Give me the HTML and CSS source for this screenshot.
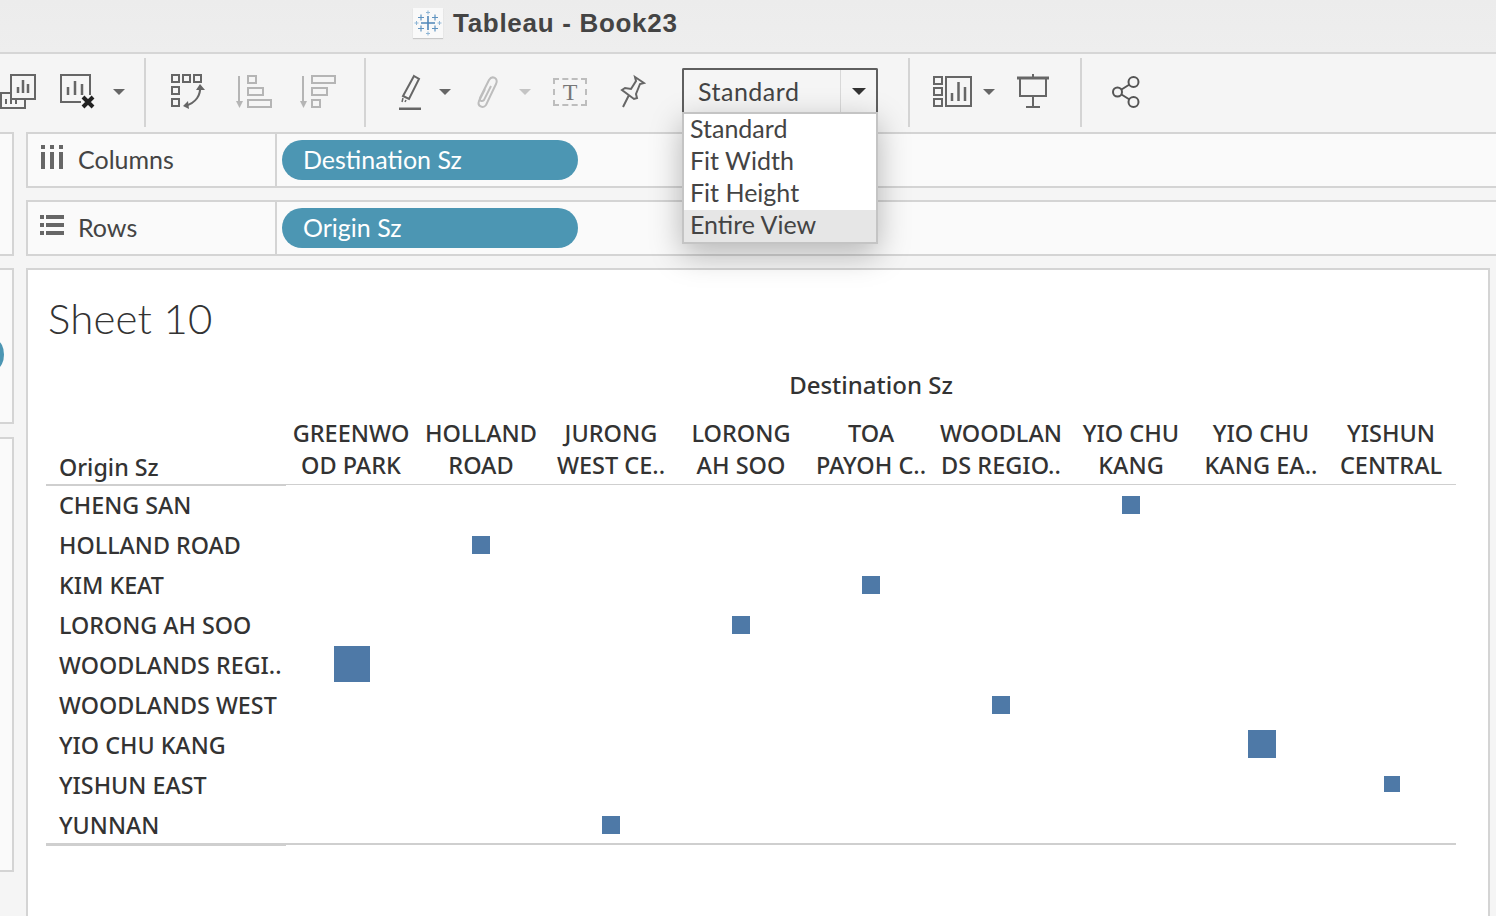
FILE: index.html
```html
<!DOCTYPE html>
<html lang="en">
<head>
<meta charset="utf-8">
<title>Tableau - Book23</title>
<link rel="stylesheet" href="styles.css">
</head>
<body>
<header class="titlebar">
  <span class="app-logo">
    <svg width="30" height="30" viewBox="0 0 30 30" fill="none" stroke-linecap="butt">
      <g stroke="#4f86b8" stroke-width="1.6"><path d="M15 8v14M8 15h14"/></g>
      <g stroke="#5f93c0" stroke-width="1.2"><path d="M8 6.500v6M5 9.500h6M22 6.500v6M19 9.500h6M8 17.500v6M5 20.500h6M22 17.500v6M19 20.500h6"/></g>
      <g stroke="#8fb6d6" stroke-width="1"><path d="M15 2.500v4M13 4.500h4M15 23.500v4M13 25.500h4M3.500 13v4M1.500 15h4M26.500 13v4M24.500 15h4"/></g>
    </svg>
  </span>
  <span class="app-title">Tableau - Book23</span>
</header>

<nav class="toolbar">
  <svg class="ico w36" viewBox="0 0 36 36" fill="none" stroke="#666" stroke-width="2"><path d="M11 1h24v24H11z"/><path d="M18 19v-6M23 19V6M28 19v-9" stroke-width="2.500"/><path d="M10 19H1v15h24v-9M6 25v5M11 25v5M16 25v5"/></svg>
  <svg class="ico w36 gap-24" viewBox="0 0 36 36" fill="none" stroke="#666" stroke-width="2"><path d="M21 28H1V1h29v20"/><path d="M8 21v-8M15 21V7M22 21v-11" stroke-width="2.500"/><path d="M23 23l10 10M33 23L23 33" stroke="#222" stroke-width="4"/></svg>
  <span class="caret gap-17"></span>
  <span class="sep gap-19"></span>

  <svg class="ico w36 gap-25" viewBox="0 0 36 36" fill="none" stroke="#666" stroke-width="2"><path d="M1 1h7v7H1zM12 1h7v7h-7zM23 1h7v7h-7zM1 13h7v7H1zM1 25h7v7H1z"/><path d="M29 12c1 9-4 17-15 20" /><path d="M25 16l4-6 5 6zM17 27l-5 5 6 3z" fill="#666" stroke="none"/></svg>
  <svg class="ico w36 gap-29" viewBox="0 0 36 36" fill="none" stroke="#b5b5b5" stroke-width="2"><path d="M3 2v28"/><path d="M0 27h7l-3.500 7z" fill="#b5b5b5" stroke="none"/><path d="M12 2h8v7h-8zM12 14h15v7H12zM12 26h23v7H12z"/></svg>
  <svg class="ico w36 gap-28" viewBox="0 0 36 36" fill="none" stroke="#b5b5b5" stroke-width="2"><path d="M3 2v28"/><path d="M0 27h7l-3.500 7z" fill="#b5b5b5" stroke="none"/><path d="M12 2h23v7H12zM12 14h15v7H12zM12 26h8v7h-8z"/></svg>
  <span class="sep gap-28"></span>

  <svg class="ico w24 gap-32" viewBox="0 0 24 36" fill="none" stroke="#666" stroke-width="2"><path d="M16 2l5 3-10 20-6-3z"/><path d="M5 24l-1 4M8 26l-1 2" stroke-width="1.500"/><path d="M1 35h22" stroke-width="3"/></svg>
  <span class="caret gap-17"></span>
  <svg class="ico w26 gap-23" viewBox="0 0 26 36" fill="none" stroke="#bdbdbd" stroke-width="2"><path d="M11 15L5 27c-2 5 4 8 7 4L22 10c3-6-4-9-7-4L6 24c-1 3 2 4 4 2l7-14"/></svg>
  <span class="caret light gap-19"></span>
  <span class="text-box gap-22">T</span>
  <svg class="ico w26 gap-33" viewBox="0 0 26 36" fill="none" stroke="#666" stroke-width="2"><path d="M15 3l9 6-4 1-4 10 1 4-3 1-12-9 3-2 6 1 5-8zM9 21L3 33"/></svg>

  <div class="combo gap-36">
    <span class="combo-value">Standard</span>
    <span class="combo-arrow"><span class="caret dark"></span></span>
  </div>
  <span class="sep gap-30"></span>

  <svg class="ico w40 gap-22" viewBox="0 0 40 36" fill="none" stroke="#666" stroke-width="2"><path d="M2 3h8v7H2zM2 14h8v7H2zM2 25h8v7H2zM14 3h25v29H14z"/><path d="M20 27v-8M26.500 27V8M33 27V13" stroke-width="2.500"/></svg>
  <span class="caret gap-11"></span>
  <svg class="ico w32 gap-22" viewBox="0 0 32 36" fill="none" stroke="#666" stroke-width="2"><path d="M0 4h32" stroke-width="3"/><path d="M3 4v18h26V4M16 22v11M9 33h14M16 0v4"/></svg>
  <span class="sep gap-31"></span>

  <svg class="ico w28 gap-30" viewBox="0 0 28 36" fill="none" stroke="#555" stroke-width="2"><circle cx="5.500" cy="18" r="4.500"/><circle cx="21.500" cy="8" r="5"/><circle cx="21.500" cy="28" r="5"/><path d="M9.500 15.500l8-5M9.500 20.500l8 5"/></svg>
</nav>

<div class="workspace">
  <aside class="side">
    <div class="side-box side-top"></div>
    <div class="side-box side-mid"><span class="side-dot"></span></div>
    <div class="side-box side-bottom"></div>
  </aside>

  <main class="content">
    <section class="shelf">
      <div class="shelf-label">
        <svg class="shelf-ico" width="22" height="24" viewBox="0 0 22 24" fill="#666"><path d="M0 0h4v4H0zM9 0h4v4H9zM18 0h4v4h-4zM0 7h4v17H0zM9 7h4v17H9zM18 7h4v17h-4z"/></svg>
        <span>Columns</span>
      </div>
      <div class="shelf-body"><span class="pill">Destination Sz</span></div>
    </section>
    <section class="shelf">
      <div class="shelf-label">
        <svg class="shelf-ico rows-ico" width="24" height="20" viewBox="0 0 24 20" fill="#666"><path d="M0 0h4v4H0zM0 8h4v4H0zM0 16h4v4H0zM6 0h18v4H6zM6 8h18v4H6zM6 16h18v4H6z"/></svg>
        <span>Rows</span>
      </div>
      <div class="shelf-body"><span class="pill">Origin Sz</span></div>
    </section>

    <section class="view">
      <h1 class="sheet-title">Sheet 10</h1>
      <div class="chart">
        <div class="axis-title">Destination Sz</div>
        <div class="chart-head">
          <div class="row-title">Origin Sz</div>
          <div class="col-head">GREENWO<br>OD PARK</div>
          <div class="col-head">HOLLAND<br>ROAD</div>
          <div class="col-head">JURONG<br>WEST CE..</div>
          <div class="col-head">LORONG<br>AH SOO</div>
          <div class="col-head">TOA<br>PAYOH C..</div>
          <div class="col-head">WOODLAN<br>DS REGIO..</div>
          <div class="col-head">YIO CHU<br>KANG</div>
          <div class="col-head">YIO CHU<br>KANG EA..</div>
          <div class="col-head">YISHUN<br>CENTRAL</div>
        </div>
        <div class="chart-body">
          <div class="row"><div class="row-name">CHENG SAN</div><div class="cell c7"><span class="mark s18"></span></div></div>
          <div class="row"><div class="row-name">HOLLAND ROAD</div><div class="cell c2"><span class="mark s18"></span></div></div>
          <div class="row"><div class="row-name">KIM KEAT</div><div class="cell c5"><span class="mark s18"></span></div></div>
          <div class="row"><div class="row-name">LORONG AH SOO</div><div class="cell c4"><span class="mark s18"></span></div></div>
          <div class="row"><div class="row-name">WOODLANDS REGI..</div><div class="cell c1"><span class="mark s36"></span></div></div>
          <div class="row"><div class="row-name">WOODLANDS WEST</div><div class="cell c6"><span class="mark s18"></span></div></div>
          <div class="row"><div class="row-name">YIO CHU KANG</div><div class="cell c8"><span class="mark s28"></span></div></div>
          <div class="row"><div class="row-name">YISHUN EAST</div><div class="cell c9"><span class="mark s16"></span></div></div>
          <div class="row"><div class="row-name">YUNNAN</div><div class="cell c3"><span class="mark s18"></span></div></div>
        </div>
      </div>
    </section>
  </main>
</div>

<ul class="fit-menu">
  <li>Standard</li>
  <li>Fit Width</li>
  <li>Fit Height</li>
  <li class="active">Entire View</li>
</ul>
</body>
</html>
```

FILE: styles.css
```css
* { box-sizing: border-box; }
html, body { margin: 0; padding: 0; height: 100%; }
body {
  position: relative;
  height: 916px;
  overflow: hidden;
  background: #f5f5f5;
  color: #333;
  font-family: "Lato", "Liberation Sans", sans-serif;
}

.titlebar {
  height: 54px;
  display: flex;
  align-items: center;
  padding: 0 0 7px 413px;
  background: linear-gradient(#ececec, #eeeeee);
  border-bottom: 2px solid #d6d6d6;
}
.app-logo {
  width: 30px;
  height: 30px;
  display: flex;
  background: #f9f9f9;
  box-shadow: 0 1px 1px #c8c8c8;
}
.app-title {
  margin: 2px 0 0 10px;
  font-family: "Liberation Sans", sans-serif;
  font-weight: 700;
  font-size: 26px;
  letter-spacing: 0.7px;
  color: #444;
}

.toolbar {
  height: 78px;
  display: flex;
  align-items: center;
  background: #f5f5f5;
  padding-bottom: 2px;
}
.ico { display: block; height: 36px; flex: none; }
.w24 { width: 24px; }
.w26 { width: 26px; }
.w28 { width: 28px; }
.w32 { width: 32px; }
.w36 { width: 36px; }
.w40 { width: 40px; }

.gap-11 { margin-left: 11px; }
.gap-17 { margin-left: 17px; }
.gap-19 { margin-left: 19px; }
.gap-22 { margin-left: 22px; }
.gap-23 { margin-left: 23px; }
.gap-24 { margin-left: 24px; }
.gap-25 { margin-left: 25px; }
.gap-28 { margin-left: 28px; }
.gap-29 { margin-left: 29px; }
.gap-30 { margin-left: 30px; }
.gap-31 { margin-left: 31px; }
.gap-32 { margin-left: 32px; }
.gap-33 { margin-left: 33px; }
.gap-36 { margin-left: 36px; }

.caret {
  flex: none;
  width: 0;
  height: 0;
  border-left: 6px solid transparent;
  border-right: 6px solid transparent;
  border-top: 6px solid #666;
}
.caret.light { border-top-color: #c4c4c4; }
.caret.dark { border-top-color: #333; border-left-width: 7px; border-right-width: 7px; border-top-width: 7px; }

.sep {
  flex: none;
  width: 2px;
  height: 69px;
  background: #d4d4d4;
}

.text-box {
  flex: none;
  width: 34px;
  height: 28px;
  display: flex;
  align-items: center;
  justify-content: center;
  border: 2px dashed #bdbdbd;
  font-family: "Liberation Serif", serif;
  font-size: 24px;
  color: #777;
}

.combo {
  flex: none;
  width: 196px;
  height: 44px;
  display: flex;
  margin-bottom: 4px;
  border: 2px solid #5f5f5f;
  border-bottom: 0;
  border-radius: 2px 2px 0 0;
  background: #f5f5f5;
}
.combo-value {
  flex: 1;
  padding-left: 14px;
  font-size: 25px;
  letter-spacing: 0.5px;
  line-height: 42px;
  color: #444;
}
.combo-arrow {
  width: 36px;
  display: flex;
  align-items: center;
  justify-content: center;
  border-left: 1px solid #d8d8d8;
}

.workspace { display: flex; align-items: stretch; }
.side { width: 14px; flex: none; display: flex; flex-direction: column; }
.side-box {
  background: #fafafa;
  border: 2px solid #d4d4d4;
  border-left: 0;
}
.side-top { height: 124px; }
.side-mid { height: 156px; margin-top: 12px; position: relative; }
.side-bottom { height: 435px; margin-top: 13px; }
.side-dot {
  position: absolute;
  left: -10px;
  top: 71px;
  width: 14px;
  height: 27px;
  border-radius: 50%;
  background: #4c96b3;
}

.content { flex: 1; margin-left: 12px; min-width: 0; }
.shelf {
  height: 56px;
  display: flex;
  margin-bottom: 12px;
  background: #fafafa;
  border: 2px solid #d4d4d4;
  border-right: 0;
}
.shelf-label {
  width: 249px;
  display: flex;
  align-items: center;
  padding: 0 0 3px 13px;
  border-right: 2px solid #d4d4d4;
  font-size: 25px;
  color: #444;
}
.shelf-label span { margin-left: 15px; }
.shelf-ico { flex: none; margin-bottom: 4px; }
.rows-ico { margin-left: -1px; margin-right: -1px; }
.shelf-body { flex: 1; display: flex; align-items: flex-start; padding: 6px 0 0 5px; }
.pill {
  width: 296px;
  height: 40px;
  padding-left: 21px;
  border-radius: 20px;
  background: #4c96b3;
  color: #fff;
  font-size: 25px;
  line-height: 38px;
}

.view {
  width: 1464px;
  height: 648px;
  background: #fff;
  border: 2px solid #d4d4d4;
  border-bottom: 0;
  padding: 0 0 0 18px;
}
.sheet-title {
  margin: 0;
  padding: 20px 0 0 2px;
  height: 80px;
  font-family: "Lato", sans-serif;
  font-weight: 300;
  font-size: 42px;
  letter-spacing: 0.15px;
  line-height: 56px;
  color: #333;
}
.chart {
  width: 1410px;
  font-family: "Noto Sans", "Open Sans", sans-serif;
  font-weight: 500;
  font-size: 24px;
  color: #333;
}
.axis-title {
  margin-left: 240px;
  height: 53px;
  padding-top: 19px;
  line-height: 32px;
  text-align: center;
}
.chart-head {
  display: grid;
  grid-template-columns: 240px repeat(9, 130px);
  height: 82px;
  padding-top: 14px;
  align-items: end;
  position: relative;
  border-bottom: 1px solid #cfcfcf;
}
.chart-head::after {
  content: "";
  position: absolute;
  left: 0;
  bottom: -2px;
  width: 240px;
  height: 2px;
  background: #cfcfcf;
}
.row-title { padding: 0 0 0 13px; font-size: 23.300px; line-height: 32px; margin-bottom: 1px; }
.col-head { text-align: center; font-size: 23.500px; line-height: 32px; white-space: nowrap; margin-bottom: 3px; }
.chart-body { height: 360px; border-bottom: 2px solid #cfcfcf; position: relative; }
.chart-body::after {
  content: "";
  position: absolute;
  left: 0;
  bottom: -3px;
  width: 240px;
  height: 2px;
  background: #cfcfcf;
}
.row {
  display: grid;
  grid-template-columns: 240px repeat(9, 130px);
  height: 40px;
  align-items: center;
}
.row-name { grid-column: 1; padding-left: 13px; font-size: 23.300px; line-height: 40px; white-space: nowrap; }
.cell { display: flex; justify-content: center; align-items: center; }
.c1 { grid-column: 2; }
.c2 { grid-column: 3; }
.c3 { grid-column: 4; }
.c4 { grid-column: 5; }
.c5 { grid-column: 6; }
.c6 { grid-column: 7; }
.c7 { grid-column: 8; }
.c8 { grid-column: 9; }
.c9 { grid-column: 10; }
.mark { display: block; background: #4e79a7; }
.s16 { width: 16px; height: 16px; margin: 0 0 2px 2px; }
.s18 { width: 18px; height: 18px; }
.s28 { width: 28px; height: 28px; margin: 0 0 2px 2px; }
.s36 { width: 36px; height: 36px; margin: 0 0 2px 2px; }

.fit-menu {
  position: absolute;
  left: 682px;
  top: 112px;
  width: 196px;
  height: 132px;
  margin: 0;
  padding: 0;
  list-style: none;
  background: #fff;
  border: 2px solid #c4c4c4;
  box-shadow: 0 10px 30px rgba(0, 0, 0, 0.28);
  font-size: 25px;
  color: #444;
}
.fit-menu li { height: 32px; line-height: 28px; padding-left: 6px; }
.fit-menu li.active { background: #e6e6e6; }
```
